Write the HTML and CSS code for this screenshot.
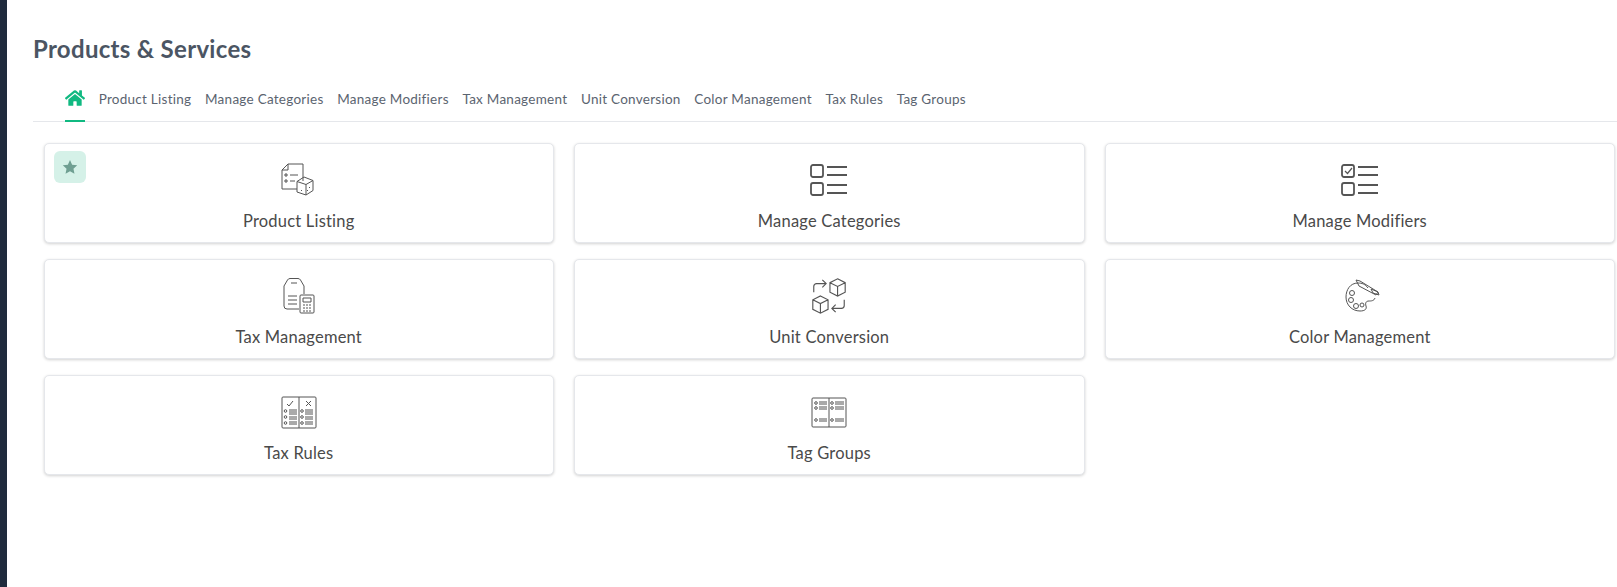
FILE: index.html
```html
<!DOCTYPE html>
<html lang="en">
<head>
<meta charset="utf-8">
<title>Products &amp; Services</title>
<link rel="stylesheet" href="styles.css">
</head>
<body>
<div class="app">
  <aside class="sidebar"></aside>
  <main class="main">
    <h1 class="title">Products &amp; Services</h1>
    <nav class="tabs">
      <a class="tab home"><svg viewBox="0 0 576 512" width="20" height="18"><path fill="#10b981" d="M280.4 148.3 96 300.1V464a16 16 0 0 0 16 16l112-.3a16 16 0 0 0 15.9-16V368a16 16 0 0 1 16-16h64a16 16 0 0 1 16 16v95.6a16 16 0 0 0 16 16.1l112 .3a16 16 0 0 0 16-16V300L295.7 148.3a12.2 12.2 0 0 0-15.3 0zM571.6 251.5 488 182.6V44a12 12 0 0 0-12-12h-56a12 12 0 0 0-12 12v72.6L318.5 43a48 48 0 0 0-61 0L4.3 251.5a12 12 0 0 0-1.6 16.9l25.5 31a12 12 0 0 0 16.9 1.6L280.4 107a12.2 12.2 0 0 1 15.3 0L531 301a12 12 0 0 0 16.9-1.6l25.5-31a12 12 0 0 0-1.8-16.9z"/></svg></a>
      <a class="tab">Product Listing</a>
      <a class="tab">Manage Categories</a>
      <a class="tab">Manage Modifiers</a>
      <a class="tab">Tax Management</a>
      <a class="tab">Unit Conversion</a>
      <a class="tab">Color Management</a>
      <a class="tab">Tax Rules</a>
      <a class="tab">Tag Groups</a>
    </nav>
    <section class="grid">
      <a class="card">
        <span class="badge"><svg viewBox="0 0 24 24" width="16" height="16"><path fill="#6f9f92" d="M12 1.5l3.2 7 7.6.9-5.6 5.2 1.5 7.5L12 18.3l-6.7 3.8 1.5-7.500L1.200 9.400l7.600-.9z"/></svg></span>
        <svg class="icon shift" viewBox="0 0 40 40"><path d="M11 4h15v17M11 4L5 10v19h15M11 4v6H5M8 14h2v2H8zM8 20h2v2H8zM13 15h8M13 21h5"/><path d="M27 17l9 3.500v10L29 35l-9-3V21.500zM20 21.500l9 3 7-4M29 24.500V35M24 31l1-1M32 27l1 1M30 30l1 1"/></svg>
        <span class="label">Product Listing</span>
      </a>
      <a class="card">
        <svg class="icon heavy" viewBox="0 0 40 40"><rect x="2" y="5" width="12" height="12" rx="2"/><rect x="2" y="23" width="12" height="12" rx="2"/><path d="M18 7h20M18 15h20M18 25h20M18 33h20"/></svg>
        <span class="label">Manage Categories</span>
      </a>
      <a class="card">
        <svg class="icon heavy" viewBox="0 0 40 40"><rect x="2" y="5" width="12" height="12" rx="2"/><rect x="2" y="23" width="12" height="12" rx="2"/><path d="M18 7h20M18 15h20M18 25h20M18 33h20"/><path class="thin" d="M5 11l2.500 2.500L12 8"/></svg>
        <span class="label">Manage Modifiers</span>
      </a>
      <a class="card">
        <svg class="icon nudge" viewBox="0 0 40 40"><path d="M21 33H9a3 3 0 0 1-3-3V10l3.500-6a3 3 0 0 1 2.500-1.500h8a3 3 0 0 1 2.500 1.500l3.500 6v8M13 7h6M10 20h9M10 24h9M10 28h9"/><path d="M23 19h12a1 1 0 0 1 1 1v16a1 1 0 0 1-1 1H23a1 1 0 0 1-1-1V20a1 1 0 0 1 1-1zM25 22h8v4h-8zM25 29h2M28 29h2M31 29h2M25 32h2M28 32h2M31 32h2M25 35h2M28 35h2M31 35h2"/></svg>
        <span class="label">Tax Management</span>
      </a>
      <a class="card">
        <svg class="icon medium" viewBox="-1 -1 42 42"><path d="M4 16v-6a3 3 0 0 1 3-3h9M13 3l4 4-4 4M36 24v6a3 3 0 0 1-3 3h-9M27 29l-4 4 4 4"/><path d="M29 2l8 4v10l-8 4-8-4V6zM21 6l8 4 8-4M29 10v10M11 20l8 4v10l-8 4-8-4V24zM3 24l8 4 8-4M11 28v10"/></svg>
        <span class="label">Unit Conversion</span>
      </a>
      <a class="card">
        <svg class="icon right" viewBox="0 0 40 40"><path d="M26 12c-3-4-6-5-10-5C8 7 4 14 4 21c0 8 6 14 14 14 5 0 7-2 6-5-1-3 0-5 3-5 2 0 5 0 6-3"/><circle cx="10" cy="17" r="2.500"/><circle cx="9" cy="24" r="2.500"/><circle cx="14" cy="30" r="2.500"/><circle cx="20" cy="29" r="2"/><path d="M14 4l4 1 18 11-2 3-17-9zM29 13l7 3 1 3-6-2z"/></svg>
        <span class="label">Color Management</span>
      </a>
      <a class="card">
        <svg class="icon" viewBox="0 0 40 40"><path d="M4 5h32a1 1 0 0 1 1 1v29a1 1 0 0 1-1 1H4a1 1 0 0 1-1-1V6a1 1 0 0 1 1-1zM20 5v31M8 12l2 2 4-5M27 9l5 5M32 9l-5 5M10 18h8M10 20h8M10 22h8M10 25h8M10 27h8M10 30h8M10 32h8M26 18h8M26 20h8M26 22h8M26 25h8M26 27h8M26 30h8M26 32h8"/><circle cx="6.500" cy="19" r="1.300"/><circle cx="6.500" cy="25" r="1.300"/><circle cx="6.500" cy="31" r="1.300"/><circle cx="23" cy="19" r="1.300"/><circle cx="23" cy="25" r="1.300"/><circle cx="23" cy="31" r="1.300"/></svg>
        <span class="label">Tax Rules</span>
      </a>
      <a class="card">
        <svg class="icon" viewBox="0 0 40 40"><path d="M4 6h32a1 1 0 0 1 1 1v27a1 1 0 0 1-1 1H4a1 1 0 0 1-1-1V7a1 1 0 0 1 1-1zM20 6v29M10 10h8M10 12h8M10 15h8M10 17h8M10 27h8M10 29h8M26 10h9M26 12h9M26 15h9M26 17h9M26 27h9M26 29h9"/><circle cx="7" cy="11" r="1.300"/><circle cx="7" cy="16" r="1.300"/><circle cx="7" cy="28" r="1.300"/><circle cx="23" cy="11" r="1.300"/><circle cx="23" cy="16" r="1.300"/><circle cx="23" cy="28" r="1.300"/></svg>
        <span class="label">Tag Groups</span>
      </a>
    </section>
  </main>
</div>
</body>
</html>
```
FILE: styles.css
```css
* { box-sizing: border-box; }
html, body { margin: 0; height: 100%; background: #fff; }
body { font-family: "Lato", "Noto Sans", sans-serif; }
.app { display: flex; min-height: 587px; }
.sidebar { width: 7px; flex: none; background: #1f2b3d; }
.main { flex: 1; min-width: 0; padding-top: 34px; }
.title { margin: 0 0 0 26px; font-size: 24px; line-height: 30px; font-weight: 700; color: #4b5563; letter-spacing: 0.3px; }
.tabs { display: flex; align-items: stretch; gap: 13.7px; height: 58px; margin-left: 26px; padding-left: 32px; border-bottom: 1px solid #e5e7eb; }
.tab { display: flex; align-items: center; padding-top: 12px; font-size: 13.5px; letter-spacing: 0.26px; color: #5b6470; white-space: nowrap; }
.home { border-bottom: 2px solid #10b981; margin-bottom: -1px; letter-spacing: 0; }
.grid { display: grid; grid-template-columns: repeat(3, 1fr); gap: 16px 20px; margin: 21px 2px 0 36.5px; }
.card { position: relative; display: flex; flex-direction: column; align-items: center; height: 100px; padding-top: 16px; background: #fff; border: 1px solid #e5e7eb; border-radius: 5px; box-shadow: 0 1px 3px rgba(0, 0, 0, 0.18); }
.badge { position: absolute; left: 9px; top: 7px; display: flex; align-items: center; justify-content: center; width: 32px; height: 32px; background: #d5f1e8; border-radius: 6px; }
.icon { width: 40px; height: 40px; fill: none; stroke: #555; stroke-width: 1; }
.shift { margin-left: -3px; }
.nudge { margin-left: -1px; }
.right { margin-left: 4px; }
.medium { stroke-width: 1.200; }
.heavy { stroke-width: 1.800; }
.thin { stroke-width: 1.200; }
.label { margin-top: 10px; font-size: 16.500px; line-height: 22px; letter-spacing: 0.2px; color: #4a4a4a; }
```
